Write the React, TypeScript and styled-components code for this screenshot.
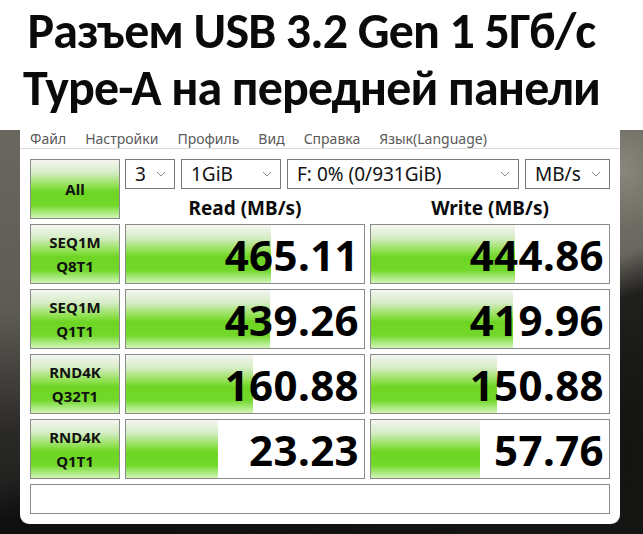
import styled, { createGlobalStyle } from "styled-components";

const GlobalStyle = createGlobalStyle`
  html, body {
    margin: 0;
    padding: 0;
    background: #ffffff;
  }
`;

const Page = styled.div`
  width: 643px;
  height: 534px;
  display: flex;
  flex-direction: column;
  overflow: hidden;
  font-family: "Noto Sans", "Open Sans", sans-serif;
`;

const Heading = styled.div`
  flex: 0 0 130px;
  display: flex;
  flex-direction: column;
  align-items: center;
  justify-content: center;
  padding: 0 20px 12px 0;
  box-sizing: border-box;
  background: #ffffff;
`;

const HeadingLine = styled.div`
  font-family: Carlito, "Noto Sans", sans-serif;
  font-weight: 700;
  font-size: 50px;
  letter-spacing: -0.85px;
  line-height: 57px;
  color: #0a0a0a;
  white-space: nowrap;
`;

// desk photo behind the benchmark window
const Backdrop = styled.div`
  flex: 1;
  display: flex;
  align-items: flex-start;
  padding: 0 23px 0 20px;
  background:
    linear-gradient(160deg, transparent 0 55%, rgba(10, 10, 10, 0.75) 62%, rgba(20, 20, 18, 0.9) 100%),
    radial-gradient(circle at 620px 40px, #8a877e 0, #6d6a62 60px, transparent 140px),
    linear-gradient(180deg, #6a6760 0%, #5e5b55 45%, #2a2927 75%, #1b1b1a 100%);
`;

const Window = styled.div`
  flex: 1;
  display: flex;
  flex-direction: column;
  padding-bottom: 10px;
  background: #ffffff;
  border-radius: 0 0 9px 9px;
`;

const MenuBar = styled.div`
  height: 18px;
  display: flex;
  align-items: center;
  gap: 19px;
  padding: 0 0 2px 10px;
  border-bottom: 1px solid #dcdcdc;
  box-sizing: content-box;
  height: 16px;
  font-size: 14px;
  color: #5a5a5a;
  white-space: nowrap;
`;

const Body = styled.div`
  display: grid;
  grid-template-columns: 90px 240px 240px;
  grid-template-rows: repeat(5, 60px) 30px;
  column-gap: 5px;
  row-gap: 5px;
  padding: 10px 10px 0 10px;
`;

const greenFill = `linear-gradient(
  180deg,
  #f4f6f1 0%,
  #d6ecc6 22%,
  #8fe04f 45%,
  #6ed524 55%,
  #72d82a 78%,
  #a6e97a 90%,
  #d2f5b6 100%
)`;

const AllButton = styled.div`
  border: 1px solid #8a8a8a;
  background: ${greenFill};
  display: flex;
  align-items: center;
  justify-content: center;
  font-weight: 700;
  font-size: 15px;
  color: #111;
`;

const TopPanel = styled.div`
  grid-column: 2 / span 2;
  display: grid;
  grid-template-rows: 30px 30px;
`;

const ComboRow = styled.div`
  display: flex;
  gap: 6px;
`;

const Combo = styled.div<{ $w?: number }>`
  ${(p) => (p.$w ? `width: ${p.$w}px;` : "flex: 1;")}
  box-sizing: border-box;
  border: 1px solid #7a7a7a;
  display: flex;
  align-items: center;
  justify-content: space-between;
  padding: 0 8px 0 9px;
  font-size: 19px;
  color: #111;
  white-space: nowrap;
`;

const Chevron = () => (
  <svg width="10" height="6" viewBox="0 0 10 6">
    <path d="M1 1 L5 5 L9 1" fill="none" stroke="#8a8a8a" strokeWidth="1" />
  </svg>
);

const HeaderRow = styled.div`
  display: grid;
  grid-template-columns: 240px 240px;
  column-gap: 5px;
  align-items: end;
`;

const ColumnTitle = styled.div`
  text-align: center;
  font-weight: 700;
  font-size: 19px;
  line-height: 22px;
  color: #0a0a0a;
`;

const TestLabel = styled.div`
  border: 1px solid #8a8a8a;
  background: ${greenFill};
  display: flex;
  flex-direction: column;
  align-items: center;
  justify-content: center;
  font-weight: 700;
  font-size: 15px;
  line-height: 24px;
  color: #111;
`;

const Meter = styled.div`
  position: relative;
  border: 1px solid #8a8a8a;
  background: #ffffff;
  display: flex;
  align-items: center;
  justify-content: flex-end;
  overflow: hidden;
`;

const MeterFill = styled.div`
  position: absolute;
  left: 0;
  top: 0;
  bottom: 0;
  background: ${greenFill};
`;

const MeterValue = styled.span`
  position: relative;
  padding: 2px 5px 0 0;
  font-weight: 700;
  font-size: 42px;
  line-height: 1;
  letter-spacing: 0.4px;
  color: #000;
`;

const StatusBar = styled.div`
  grid-column: 1 / span 3;
  border: 1px solid #8a8a8a;
`;

const rows = [
  { a: "SEQ1M", b: "Q8T1", read: "465.11", rf: 0.61, write: "444.86", wf: 0.605 },
  { a: "SEQ1M", b: "Q1T1", read: "439.26", rf: 0.605, write: "419.96", wf: 0.597 },
  { a: "RND4K", b: "Q32T1", read: "160.88", rf: 0.534, write: "150.88", wf: 0.53 },
  { a: "RND4K", b: "Q1T1", read: "23.23", rf: 0.387, write: "57.76", wf: 0.458 },
];

const menu = ["Файл", "Настройки", "Профиль", "Вид", "Справка", "Язык(Language)"];

export default function App() {
  return (
    <>
      <GlobalStyle />
      <Page>
        <Heading>
          <HeadingLine>Разъем USB 3.2 Gen 1 5Гб/с</HeadingLine>
          <HeadingLine>Type-A на передней панели</HeadingLine>
        </Heading>
        <Backdrop>
          <Window>
            <MenuBar>
              {menu.map((m) => (
                <span key={m}>{m}</span>
              ))}
            </MenuBar>
            <Body>
              <AllButton>All</AllButton>
              <TopPanel>
                <ComboRow>
                  <Combo $w={50}>
                    3 <Chevron />
                  </Combo>
                  <Combo $w={100}>
                    1GiB <Chevron />
                  </Combo>
                  <Combo>
                    F: 0% (0/931GiB) <Chevron />
                  </Combo>
                  <Combo $w={85}>
                    MB/s <Chevron />
                  </Combo>
                </ComboRow>
                <HeaderRow>
                  <ColumnTitle>Read (MB/s)</ColumnTitle>
                  <ColumnTitle>Write (MB/s)</ColumnTitle>
                </HeaderRow>
              </TopPanel>
              {rows.map((r) => [
                <TestLabel key={r.a + r.b}>
                  <span>{r.a}</span>
                  <span>{r.b}</span>
                </TestLabel>,
                <Meter key={r.read}>
                  <MeterFill style={{ width: `${r.rf * 100}%` }} />
                  <MeterValue>{r.read}</MeterValue>
                </Meter>,
                <Meter key={r.write}>
                  <MeterFill style={{ width: `${r.wf * 100}%` }} />
                  <MeterValue>{r.write}</MeterValue>
                </Meter>,
              ])}
              <StatusBar />
            </Body>
          </Window>
        </Backdrop>
      </Page>
    </>
  );
}
